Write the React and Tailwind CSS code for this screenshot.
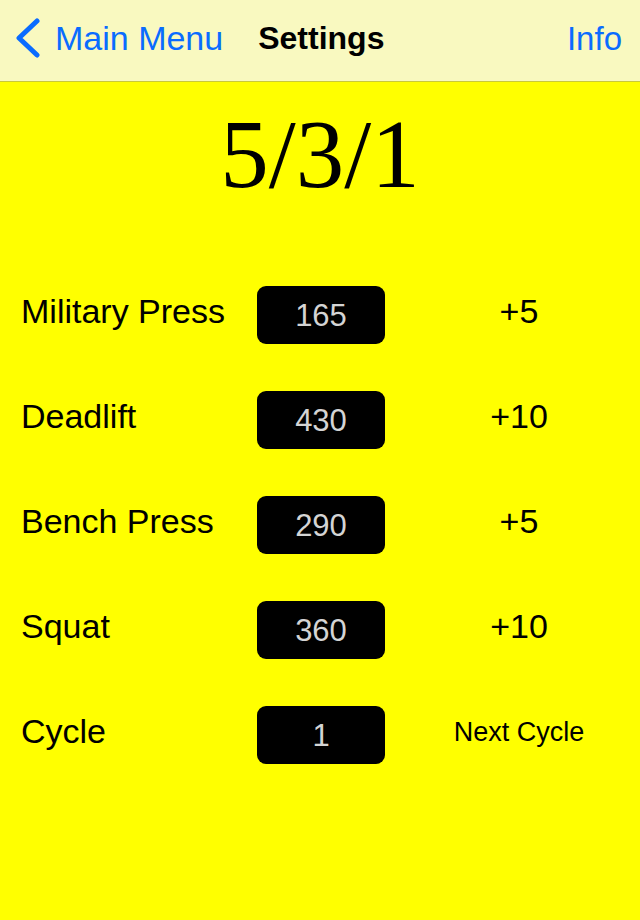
import React from 'react';

const ROWS = [
  { label: 'Military Press', value: '165', extra: '+5' },
  { label: 'Deadlift', value: '430', extra: '+10' },
  { label: 'Bench Press', value: '290', extra: '+5' },
  { label: 'Squat', value: '360', extra: '+10' },
  { label: 'Cycle', value: '1', extra: 'Next Cycle', small: true },
];

export default function App() {
  return (
    <div className="w-[640px] h-[920px] bg-[#ffff00] flex flex-col font-['Liberation_Sans',Arial,sans-serif] overflow-hidden">
      {/* Nav bar */}
      <div className="h-[82px] flex-shrink-0 bg-[#f9f9c0] border-b border-[#c9c93a] flex items-center">
        <div className="flex items-center pl-[14px] text-[#0a6cff]">
          <svg width="28" height="40" viewBox="0 0 28 40" className="-mt-[5px]">
            <path d="M23 3 L5 20 L23 37" fill="none" stroke="#0a6cff" strokeWidth="5" strokeLinecap="round" strokeLinejoin="round" />
          </svg>
          <span className="ml-[13px] text-[34px] leading-none -mt-[5px]">Main Menu</span>
        </div>
        <span className="ml-[35px] text-[32px] font-bold text-black leading-none -mt-[5px]">Settings</span>
        <span className="ml-auto mr-[18px] text-[33px] text-[#0a6cff] leading-none -mt-[5px]">Info</span>
      </div>

      {/* Title */}
      <div className="mt-[24px] text-center text-[97px] leading-none text-black font-['Liberation_Serif','Times_New_Roman',serif]">
        5/3/1
      </div>

      {/* Rows */}
      <div className="mt-[83px] flex flex-col gap-[47px]">
        {ROWS.map((r) => (
          <div key={r.label} className="h-[58px] flex items-center">
            <div className="pl-[21px] w-[257px] text-[34px] leading-none text-black -mt-[9px]">{r.label}</div>
            <div className="w-[128px] h-[58px] bg-black rounded-[9px] flex items-center justify-center text-[31px] text-[#d4d4d4] leading-none">
              {r.value}
            </div>
            <div
              className={`ml-[15px] w-[238px] text-center text-black leading-none ${
                r.small ? 'text-[27px] -mt-[5px]' : 'text-[34px] -mt-[9px]'
              }`}
            >
              {r.extra}
            </div>
          </div>
        ))}
      </div>
    </div>
  );
}
